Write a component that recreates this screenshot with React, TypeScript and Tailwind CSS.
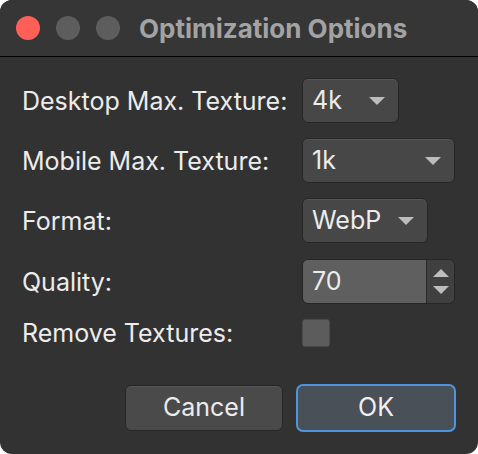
const font = { fontFamily: 'Inter, "Liberation Sans", Arial, sans-serif' };

function Caret() {
  return (
    <svg width="16" height="8" viewBox="0 0 16 8" className="shrink-0">
      <path d="M0 0 L16 0 L8 8 Z" fill="#bdbdbd" />
    </svg>
  );
}

function Select({ value, width }: { value: string; width: string }) {
  return (
    <div
      className={`flex h-[45px] ${width} items-center justify-between rounded-[6px] border border-[#262626] bg-[#474747] pl-[9px] pr-[13px] text-[25px] text-[#ececec] shadow-[inset_0_1px_0_#555]`}
    >
      <span>{value}</span>
      <Caret />
    </div>
  );
}

function Row({ label, children, className = "" }: { label: string; children: React.ReactNode; className?: string }) {
  return (
    <div className={`flex items-center ${className}`}>
      <div className="w-[280px] text-[25px] leading-[28px] text-[#ececec]">{label}</div>
      {children}
    </div>
  );
}

export default function App() {
  return (
    <div className="h-[454px] w-[478px] bg-white" style={font}>
      <div className="flex h-full w-full flex-col overflow-hidden rounded-[12px] bg-[#323232]">
        {/* title bar */}
        <div className="flex h-[57px] shrink-0 items-center border-b border-black bg-[#363636] pl-[16px]">
          <div className="flex gap-[16px]">
            <span className="h-[24px] w-[24px] rounded-full bg-[#fe5f57]" />
            <span className="h-[24px] w-[24px] rounded-full bg-[#5d5d5d]" />
            <span className="h-[24px] w-[24px] rounded-full bg-[#5d5d5d]" />
          </div>
          <div className="ml-[19px] text-[26px] font-bold text-[#a3a3a3]">Optimization Options</div>
        </div>

        {/* body */}
        <div className="flex flex-col pl-[22px] pt-[21px]">
          <Row label="Desktop Max. Texture:">
            <Select value="4k" width="w-[97px]" />
          </Row>
          <Row label="Mobile Max. Texture:" className="mt-[15px]">
            <Select value="1k" width="w-[153px]" />
          </Row>
          <Row label="Format:" className="mt-[15px]">
            <Select value="WebP" width="w-[126px]" />
          </Row>
          <Row label="Quality:" className="mt-[16px]">
            <div className="flex h-[45px] w-[153px] overflow-hidden rounded-[6px] border border-[#262626]">
              <div className="flex flex-1 items-center bg-[#5f5f5f] pl-[9px] text-[25px] text-[#ececec]">70</div>
              <div className="flex w-[28px] flex-col items-center justify-center gap-[9px] border-l border-[#2a2a2a] bg-[#404040]">
                <svg width="16" height="8" viewBox="0 0 16 8">
                  <path d="M0 8 L16 8 L8 0 Z" fill="#bdbdbd" />
                </svg>
                <svg width="16" height="8" viewBox="0 0 16 8">
                  <path d="M0 0 L16 0 L8 8 Z" fill="#bdbdbd" />
                </svg>
              </div>
            </div>
          </Row>
          <Row label="Remove Textures:" className="mt-[15px]">
            <div className="h-[28px] w-[28px] rounded-[3px] border border-[#4a4a4a] bg-[#5c5c5c]" />
          </Row>
        </div>

        {/* buttons */}
        <div className="mt-[37px] flex items-center justify-end gap-[13px] pr-[22px]">
          <div className="flex h-[46px] w-[158px] items-center justify-center rounded-[6px] border border-[#262626] bg-[#4a4a4a] text-[25px] text-[#ececec] shadow-[inset_0_1px_0_#575757]">
            Cancel
          </div>
          <div className="flex h-[48px] w-[160px] items-center justify-center rounded-[7px] border-2 border-[#4f95de] bg-[#4a5058] text-[25px] text-[#f0f0f0]">
            OK
          </div>
        </div>
      </div>
    </div>
  );
}
